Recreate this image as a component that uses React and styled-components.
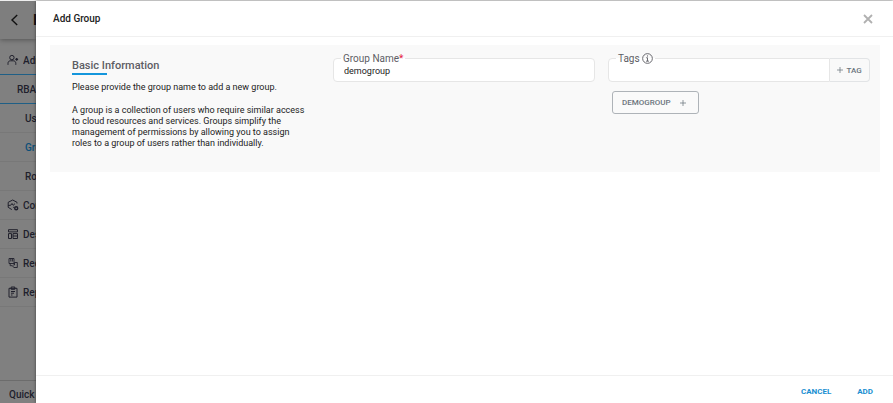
import React, { useState } from "react";
import styled, { createGlobalStyle, css } from "styled-components";

const GlobalStyle = createGlobalStyle`
  *, *::before, *::after { box-sizing: border-box; }
  body { margin: 0; background: #fff; color: #222; font-family: Roboto, "Liberation Sans", sans-serif; font-size: 10px; }
  button, input { font-family: inherit; margin: 0; }
  button { cursor: pointer; }
  svg { flex: none; }
  h1, h2, p { margin: 0; }
`;

const Page = styled.div`
  display: grid;
  grid-template-columns: 36px minmax(0, 1fr);
  min-height: 100vh;
  border-top: 1px solid #eee;
`;

const Sidebar = styled.aside`
  display: flex;
  flex-direction: column;
  min-width: 0;
  overflow: hidden;
  white-space: nowrap;
  background: #808080;
  color: #20202c;
`;

const SidebarHeader = styled.header`
  display: flex;
  align-items: center;
  gap: 12px;
  height: 38px;
  padding-left: 9px;
  flex: none;
  background: #7e7e7e;
  box-shadow: 0 1px 5px rgba(0, 0, 0, 0.35);
  color: #111;
  font-size: 14px;
  font-weight: 700;
`;

const ClippedText = styled.span`
  flex: 1;
  min-width: 0;
  overflow: hidden;
`;

const BackButton = styled.button`
  display: flex;
  padding: 0;
  border: 0;
  background: none;
  color: inherit;
`;

const Menu = styled.nav`
  display: flex;
  flex-direction: column;
  flex: 1;
  padding-top: 7px;
`;

const levels = {
  top: css`padding-left: 7px;`,
  section: css`padding-left: 17px;`,
  leaf: css`padding-left: 25px;`,
};

const MenuLink = styled.a`
  display: flex;
  align-items: center;
  gap: 4px;
  height: 29px;
  flex: none;
  border-bottom: 1px solid ${(p) => (p.$open ? "#1f5f86" : "#787878")};
  color: ${(p) => (p.$active ? "#0c4f78" : "inherit")};
  font-size: 10px;
  font-weight: 500;
  text-decoration: none;
  ${(p) => levels[p.$level]}
`;

const QuickLink = styled.a`
  display: flex;
  align-items: center;
  height: 23px;
  padding: 4px 0 0 9px;
  border-top: 1px solid #6c6c6c;
  color: inherit;
  font-size: 10px;
  font-weight: 500;
  text-decoration: none;
`;

const Drawer = styled.section`
  display: flex;
  flex-direction: column;
  min-width: 0;
  z-index: 1;
  background: #fff;
  box-shadow: 0 0 3px rgba(0, 0, 0, 0.5);
`;

const DrawerHeader = styled.header`
  display: flex;
  align-items: center;
  justify-content: space-between;
  height: 36px;
  padding: 0 20px 0 17px;
  border-bottom: 1px solid #f0f0f0;
`;

const DrawerTitle = styled.h1`
  color: #222;
  font-size: 10px;
  line-height: 12px;
  font-weight: 500;
`;

const CloseButton = styled.button`
  display: flex;
  padding: 0;
  border: 0;
  background: none;
  color: #b0b0b0;
`;

const DrawerBody = styled.form`
  flex: 1;
  padding: 8px 13px 8px 14px;
`;

const Card = styled.div`
  display: grid;
  grid-template-columns: 248px minmax(0, 1fr) minmax(0, 1fr);
  column-gap: 13px;
  min-height: 127px;
  padding: 13px 10px 22px 22px;
  background: #f9f9f9;
`;

const Intro = styled.div`
  padding-right: 12px;
  color: #222;
  font-size: 9px;
  line-height: 11px;
`;

const IntroTitle = styled.h2`
  color: #5d5d64;
  font-size: 11px;
  line-height: 15px;
  font-weight: 500;

  &::after {
    content: "";
    display: block;
    width: 35px;
    height: 2px;
    margin: 0 0 7px;
    background: #1496dc;
  }
`;

const Paragraph = styled.p`
  & + & { margin-top: 12px; }
`;

const Field = styled.div`
  position: relative;
  display: flex;
  height: 24px;
`;

const FieldLabel = styled.label`
  position: absolute;
  top: -6px;
  left: 8px;
  display: flex;
  align-items: center;
  height: 13px;
  padding: 0 2px;
  background: linear-gradient(#f9f9f9 50%, #fff 50%);
  color: #5d5d64;
  font-size: 10px;
`;

const Required = styled.span`
  color: #e5173f;
`;

const InfoButton = styled.button`
  display: flex;
  padding: 0;
  margin-left: 2px;
  border: 0;
  background: none;
  color: #5d5d64;
`;

const TextInput = styled.input`
  flex: 1;
  min-width: 0;
  padding: 1px 10px 0;
  border: 1px solid #e6e6e6;
  border-radius: ${(p) => (p.$joined ? "4px 0 0 4px" : "4px")};
  background: #fff;
  color: #222;
  font-size: 9px;
`;

const FieldColumn = styled.div`
  min-width: 0;
`;

const TagButton = styled.button`
  display: flex;
  align-items: center;
  justify-content: center;
  gap: 3px;
  width: 40px;
  padding: 0;
  border: 1px solid #e2e4e6;
  border-left: 0;
  border-radius: 0 4px 4px 0;
  background: #f9f9f9;
  color: #6c757d;
  font-size: 8px;
  font-weight: 500;
`;

const Chip = styled.button`
  display: flex;
  align-items: center;
  gap: 9px;
  height: 23px;
  margin: 9px 0 0 4px;
  padding: 0 12px 0 9px;
  border: 1px solid #aeb3b8;
  border-radius: 3px;
  background: #fafafa;
  color: #6c757d;
  font-size: 8px;
  font-weight: 500;
`;

const DrawerFooter = styled.footer`
  display: flex;
  align-items: center;
  justify-content: flex-end;
  gap: 26px;
  height: 28px;
  padding: 5px 20px 0 0;
  border-top: 1px solid #f0f0f0;
`;

const ActionButton = styled.button`
  padding: 0;
  border: 0;
  background: none;
  color: #1a8fd1;
  font-size: 8px;
  line-height: 12px;
  font-weight: 700;
`;

const Icon = ({ size = 12, stroke = 1, children }) => (
  <svg width={size} height={size} viewBox="0 0 12 12" fill="none" stroke="currentColor" strokeWidth={stroke} aria-hidden="true">
    {children}
  </svg>
);

const UserIcon = () => (
  <Icon>
    <circle cx="4.9" cy="3.6" r="2.2" />
    <path d="M1 10.8V9.4c0-1.7 1-2.6 2.6-2.6h2.6c1.6 0 2.6.9 2.6 2.6v1.4" />
    <path d="M8.3 5.4h2.8M9.7 4v2.8" strokeWidth="1.3" />
  </Icon>
);

const ComplianceIcon = () => (
  <Icon>
    <path d="M10 4.5V3.3L5.7 1 1.2 3.3v5l3.6 2.3M1.2 6.5l2.6-.3L5 4.5l1.2 1.8L8 4.6" />
    <circle cx="9.2" cy="9.2" r="1.5" strokeWidth="1.4" />
    <path d="M6.2 8.2l1.4.7" />
  </Icon>
);

const LayoutIcon = () => (
  <Icon>
    <path d="M1.5 1.7h9v2.2h-9zM1.5 5.6h3v4.9h-3zM6 5.6h4.5v4.9H6zM6 8h4.5" />
  </Icon>
);

const ResourceIcon = () => (
  <Icon stroke={0.9}>
    <path d="M2 1.5h5v5H2zM3.8 1.5v3M5.4 1.5v3M3.2 6.5v2.2h2.3M6.2 8h1.3V5.5h2.8v5H6.8L5.5 8.8" />
  </Icon>
);

const ReportIcon = () => (
  <Icon>
    <path d="M2 2.3h8v8.8H2zM4.2 1h3.6v2.3H4.2zM4 5.5h4M4 7.2h3M4 9h1.5" />
  </Icon>
);

const PlusIcon = () => (
  <Icon size={6} stroke={1.5}>
    <path d="M6 0v12M0 6h12" />
  </Icon>
);

const menuItems = [
  { text: "Admin", level: "top", icon: <UserIcon />, open: true },
  { text: "RBAC", level: "section", open: true },
  { text: "Users", level: "leaf" },
  { text: "Groups", level: "leaf", active: true },
  { text: "Roles", level: "leaf" },
  { text: "Config", level: "top", icon: <ComplianceIcon /> },
  { text: "Design", level: "top", icon: <LayoutIcon /> },
  { text: "Recent", level: "top", icon: <ResourceIcon /> },
  { text: "Reports", level: "top", icon: <ReportIcon /> },
];

export default function App() {
  const [name, setName] = useState("demogroup");
  const [tag, setTag] = useState("");

  return (
    <>
      <GlobalStyle />
      <Page>
        <Sidebar>
          <SidebarHeader>
            <BackButton type="button" aria-label="Back">
              <Icon stroke={1.4}><path d="M8.2 1L3 6l5.2 5" /></Icon>
            </BackButton>
            <ClippedText>I</ClippedText>
          </SidebarHeader>
          <Menu aria-label="Main menu">
            {menuItems.map((item) => (
              <MenuLink key={item.text} href="#" $level={item.level} $open={item.open} $active={item.active}>
                {item.icon}
                <ClippedText>{item.text}</ClippedText>
              </MenuLink>
            ))}
          </Menu>
          <QuickLink href="#"><ClippedText>Quick</ClippedText></QuickLink>
        </Sidebar>

        <Drawer aria-labelledby="drawer-title">
          <DrawerHeader>
            <DrawerTitle id="drawer-title">Add Group</DrawerTitle>
            <CloseButton type="button" aria-label="Close">
              <Icon size={10} stroke={2.2}><path d="M1.2 1.2l9.6 9.6M10.8 1.2l-9.6 9.6" /></Icon>
            </CloseButton>
          </DrawerHeader>

          <DrawerBody id="group-form" onSubmit={(e) => e.preventDefault()}>
            <Card>
              <Intro>
                <IntroTitle>Basic Information</IntroTitle>
                <Paragraph>Please provide the group name to add a new group.</Paragraph>
                <Paragraph>
                  A group is a collection of users who require similar access to cloud resources and services. Groups
                  simplify the management of permissions by allowing you to assign roles to a group of users rather
                  than individually.
                </Paragraph>
              </Intro>

              <Field>
                <TextInput id="group-name" value={name} onChange={(e) => setName(e.target.value)} required />
                <FieldLabel htmlFor="group-name">
                  Group Name<Required>*</Required>
                </FieldLabel>
              </Field>

              <FieldColumn>
                <Field>
                  <TextInput id="tags" value={tag} onChange={(e) => setTag(e.target.value)} $joined />
                  <FieldLabel as="div">
                    <label htmlFor="tags">Tags</label>
                    <InfoButton type="button" aria-label="About tags">
                      <Icon size={11}>
                        <circle cx="6" cy="6" r="5.3" />
                        <path d="M6 2.6v1.3M4.6 5.2H6v3.6M4.4 8.9h3.2" />
                      </Icon>
                    </InfoButton>
                  </FieldLabel>
                  <TagButton type="button"><PlusIcon />TAG</TagButton>
                </Field>
                <Chip type="button">DEMOGROUP<PlusIcon /></Chip>
              </FieldColumn>
            </Card>
          </DrawerBody>

          <DrawerFooter>
            <ActionButton type="button">CANCEL</ActionButton>
            <ActionButton type="submit" form="group-form">ADD</ActionButton>
          </DrawerFooter>
        </Drawer>
      </Page>
    </>
  );
}
